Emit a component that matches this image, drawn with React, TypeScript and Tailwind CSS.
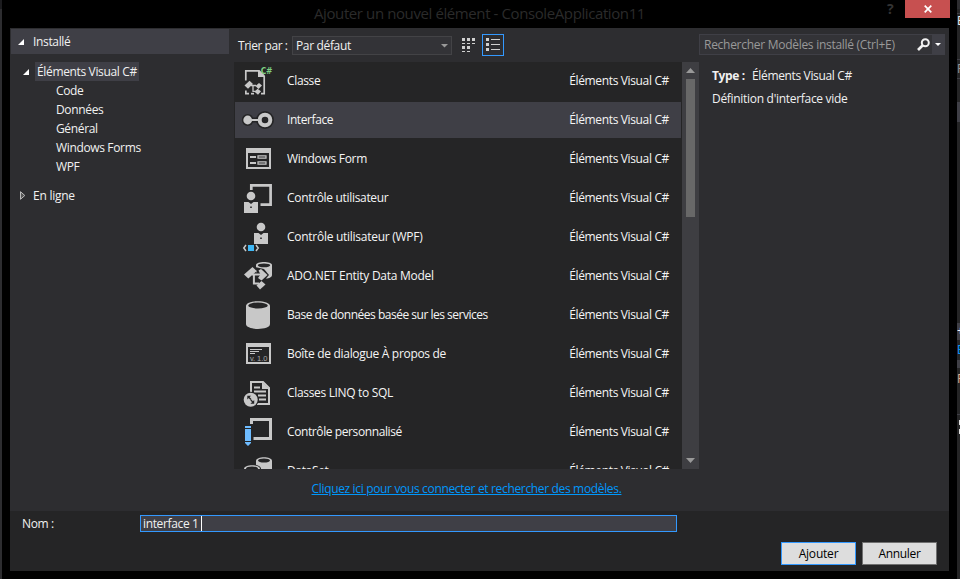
import type { ReactNode } from "react";

const FG = "#c8c8c8";
const BG = "#252526";

function Icon({ children }: { children: ReactNode }) {
  return (
    <svg width="36" height="36" viewBox="0 0 36 36" fill="none" className="shrink-0">
      {children}
    </svg>
  );
}

const Person = ({ x, y }: { x: number; y: number }) => (
  <g>
    <circle cx={x} cy={y} r="5.4" fill={BG} />
    <circle cx={x} cy={y} r="4.3" fill={FG} />
    <path d={`M${x - 7} ${y + 6}h4.500l2.500 2 2.500-2h4.500v11h-14z`} fill={FG} />
    <path d={`M${x - 0.8} ${y + 10.500}h1.600v1.600h-1.600z`} fill={BG} />
  </g>
);

const ClassIcon = () => (
  <Icon>
    <path d="M4.800 17.500V7.800H17.500M23.200 13V30.700H20" stroke={FG} strokeWidth="1.700" />
    <path d="M4 27.500h1.700v2.300H8v1.700H4z" fill={FG} />
    <path d="M17 7h1.500l5.500 5.500V14h-7z" fill={FG} />
    <path d="M3.500 22.500l5-4.700 3.500 3.200-5 4.700z" fill={FG} />
    <path d="M10 22.500h5M12 22v6.300h4" stroke={FG} strokeWidth="1.300" />
    <path d="M14.500 23l3.500-3 3 2.500-3.500 3.500zM13.500 28.800l3-3 3.500 2.500-3 3.500z" fill={FG} />
    <path d="M10 29.800h3v1.700h-3z" fill={FG} />
    <text x="19.700" y="10.600" fontFamily="DejaVu Sans" fontWeight="700" fontSize="8.800" textLength="11.500" lengthAdjust="spacingAndGlyphs" fill="#7fd184">C#</text>
  </Icon>
);

const InterfaceIcon = () => (
  <Icon>
    <g fill={BG}>
      <circle cx="6.700" cy="18" r="5.900" />
      <circle cx="24" cy="18" r="9" />
      <path d="M8 15.500h10v5H8z" />
    </g>
    <path d="M8 18h10" stroke={FG} strokeWidth="2" />
    <circle cx="6.700" cy="18" r="4.400" fill={FG} />
    <circle cx="24" cy="18" r="5.300" stroke={FG} strokeWidth="4" />
  </Icon>
);

const FormIcon = () => (
  <Icon>
    <path d="M5 7h25v21H5zM7 12v14h21V12z" fill={FG} fillRule="evenodd" />
    <path d="M9 16h6M9 22h6" stroke={FG} strokeWidth="2" />
    <path d="M17 14.800h8v2.400h-8zM17 20.800h8v2.400h-8z" stroke={FG} strokeWidth="1.200" />
  </Icon>
);

const UserIcon = () => (
  <Icon>
    <path d="M10.300 10V5.400H29.600V24.600H19.500" stroke={FG} strokeWidth="2.700" />
    <Person x={10} y={16} />
  </Icon>
);

const WpfIcon = () => (
  <Icon>
    <Person x={20} y={8} />
    <path d="M6 25h8v8H6z" fill={BG} />
    <path d="M7 26h6v6H7z" fill="#3fb8f5" />
    <path d="M5 26L2.800 29 5 32M15 26l2.200 3L15 32" stroke={FG} strokeWidth="1.500" />
  </Icon>
);

const AdoIcon = () => (
  <Icon>
    <path d="M15 7c0-4 16-4 16 0v10c0 2-3 3.500-6 3.500L15 14z" fill={FG} />
    <ellipse cx="23" cy="7.300" rx="6.200" ry="1.900" fill={BG} />
    <path d="M14 9l9 2 5 6-6 7-4-2z" fill={BG} />
    <path d="M3 16.500l8.500-7.500 4.300 4-8.500 7.500z" fill={FG} />
    <path d="M11 16.500h9M12.900 16v9.500H18" stroke={FG} strokeWidth="2" />
    <path d="M17.500 12.500l2.500-1.500 6.500 6-6 5.500-3.500-2.500 2.500-3.500z" fill={FG} />
    <path d="M15.500 27.500l5-4.500 4 3.500-5.500 5z" fill={FG} />
  </Icon>
);

const DatabaseIcon = () => (
  <Icon>
    <path d="M5 9C5 2.500 29 2.500 29 9v18c0 6.500-24 6.500-24 0z" fill={FG} />
    <ellipse cx="17" cy="8.500" rx="9.800" ry="3" fill={BG} />
  </Icon>
);

const AboutIcon = () => (
  <Icon>
    <path d="M5 7h25v21H5zM7 11v15h21V11z" fill={FG} fillRule="evenodd" />
    <path d="M9 13.500h12M9 15.500h9M9 17.500h5" stroke={FG} strokeWidth="1" />
    <text x="9" y="25" fontFamily="Liberation Sans" fontSize="7.500" textLength="17" fill="#aaa">v. 1.0</text>
  </Icon>
);

const LinqIcon = () => (
  <Icon>
    <path d="M10 17V7h12l6 6v16H16" stroke={FG} strokeWidth="2" />
    <path d="M21 7v7h7z" fill={FG} />
    <path d="M13 12.500h6M13 16.500h12M17 20.500h8M18 24.500h7" stroke={FG} strokeWidth="1.800" />
    <circle cx="9.700" cy="24.700" r="8" fill={BG} />
    <circle cx="9.700" cy="24.700" r="7" fill={FG} />
    <path d="M6.300 20.800h3.800L6.300 24.600zM13.200 28.700H9.400l3.800-3.800z" fill={BG} />
    <path d="M7.500 22l2.500 2.500M9.800 25l2.400 2.400" stroke={BG} strokeWidth="1.300" />
  </Icon>
);

const CustomIcon = () => (
  <Icon>
    <path d="M10.500 10V5.500h19v19H12.500" stroke={FG} strokeWidth="3" />
    <path d="M4 12h6v2H4zM4 15h6v12H4zM4 28h6v1l-3 3-3-3z" fill="#6ebcff" />
  </Icon>
);

const DataSetIcon = () => (
  <Icon>
    <path d="M15 8c0-5 16-5 16 0v12H15z" fill={FG} />
    <ellipse cx="23" cy="7.500" rx="6" ry="2" fill={BG} />
    <path d="M2 16c0-6 18-6 18 0v8H2z" fill={BG} />
    <path d="M3 16c0-5 16-5 16 0v10H3z" fill={FG} />
    <ellipse cx="11" cy="15.500" rx="6" ry="2" fill={BG} />
  </Icon>
);

const items: { name: string; icon: ReactNode; track: string }[] = [
  { name: "Classe", icon: <ClassIcon />, track: "tracking-[-0.35px]" },
  { name: "Interface", icon: <InterfaceIcon />, track: "tracking-[-0.42px]" },
  { name: "Windows Form", icon: <FormIcon />, track: "tracking-[-0.3px]" },
  { name: "Contrôle utilisateur", icon: <UserIcon />, track: "tracking-[-0.32px]" },
  { name: "Contrôle utilisateur (WPF)", icon: <WpfIcon />, track: "tracking-[-0.27px]" },
  { name: "ADO.NET Entity Data Model", icon: <AdoIcon />, track: "tracking-[-0.27px]" },
  { name: "Base de données basée sur les services", icon: <DatabaseIcon />, track: "tracking-[-0.49px]" },
  { name: "Boîte de dialogue À propos de", icon: <AboutIcon />, track: "tracking-[-0.31px]" },
  { name: "Classes LINQ to SQL", icon: <LinqIcon />, track: "tracking-[-0.33px]" },
  { name: "Contrôle personnalisé", icon: <CustomIcon />, track: "tracking-[-0.4px]" },
  { name: "DataSet", icon: <DataSetIcon />, track: "tracking-[-0.35px]" },
];

function Sidebar() {
  return (
    <aside className="w-[224px] shrink-0 pl-px pt-px">
      <div className="flex h-[25px] w-[218px] items-center bg-[#3f3f46] pl-[7px]">
        <svg width="6" height="6" className="mr-[9px]"><path d="M6 0v6H0z" fill="#fff" /></svg>
        Installé
      </div>
      <div className="mt-2 flex h-[19px] items-center pl-3">
        <svg width="6" height="6" className="mr-[6px]"><path d="M6 0v6H0z" fill="#fff" /></svg>
        <span className="flex h-[19px] w-[104px] items-center bg-[#3f3f46] pl-[2px]">Éléments Visual C#</span>
      </div>
      {["Code", "Données", "Général", "Windows Forms", "WPF"].map((t) => (
        <div key={t} className="h-[19px] pl-[45px] leading-[20px]">{t}</div>
      ))}
      <div className="mt-[10px] flex h-[19px] items-center pl-[9px] tracking-[-0.25px]">
        <svg width="6" height="9" className="mr-[7px]"><path d="M.5 .7v7.600L4.800 4.500z" fill="#555" stroke="#bbb" /></svg>
        En ligne
      </div>
    </aside>
  );
}

function Toolbar() {
  return (
    <div className="flex h-[34px] items-center pl-1">
      <span className="w-[54px] pt-[2px] tracking-[-0.45px]">Trier par :</span>
      <div className="mt-px flex h-[19px] w-[160px] items-center justify-between border border-[#434346] bg-[#333337] pl-[3px] pr-[3px]">
        <span>Par défaut</span>
        <svg width="7" height="4"><path d="M0 0h7L3.500 3.500z" fill="#999" /></svg>
      </div>
      <svg width="13" height="14" className="ml-[10px]" fill="#d0d0d0">
        <path d="M0 0h3v3H0zM5 0h3v3H5zM10 0h3v3h-3zM0 5h3v1H0zM5 5h3v1H5zM10 5h3v1h-3zM0 8h3v3H0zM5 8h3v3H5zM0 13h3v1H0zM5 13h3v1H5z" />
      </svg>
      <div className="ml-[7px] flex h-[22px] w-[22px] items-center justify-center border border-[#3399ff]">
        <svg width="14" height="14" fill="#d0d0d0">
          <path d="M0 0h3v3H0zM0 5h3v3H0zM0 10h3v3H0zM5 1h9v1H5zM5 6h9v1H5zM5 11h9v1H5z" />
        </svg>
      </div>
    </div>
  );
}

function TemplateList() {
  return (
    <div className="flex h-[407px]">
      <div className="w-[448px] overflow-hidden bg-[#252526] pl-px pt-px">
        {items.map((it, i) => (
          <div
            key={it.name}
            className={`mb-[3px] flex h-9 w-[446px] items-center pl-[6px] pr-3 text-[#f5f5f5] ${i === 1 ? "bg-[#3f3f46]" : ""}`}
          >
            {it.icon}
            <span className={`ml-[10px] ${it.track}`}>{it.name}</span>
            <span className="ml-auto">Éléments Visual C#</span>
          </div>
        ))}
      </div>
      <div className="flex w-[17px] flex-col items-center bg-[#3e3e42]">
        <svg width="9" height="5" className="mt-[6px]"><path d="M4.500 0L9 5H0z" fill="#999" /></svg>
        <div className="mt-[6px] h-[138px] w-[9px] bg-[#686868]" />
        <svg width="9" height="5" className="mb-[6px] mt-auto"><path d="M0 0h9L4.500 5z" fill="#999" /></svg>
      </div>
    </div>
  );
}

function Details() {
  return (
    <section className="flex-1 pt-[6px]">
      <div className="flex h-[21px] w-[246px] items-center border border-[#3f3f46] bg-[#333337] pl-1">
        <span className="tracking-[-0.28px] text-[#999]">Rechercher Modèles installé (Ctrl+E)</span>
        <svg width="13" height="13" className="ml-auto mr-[2px]" fill="none">
          <circle cx="8.300" cy="4.700" r="3.500" stroke="#f1f1f1" strokeWidth="2" />
          <path d="M5.500 7.500L1 12" stroke="#f1f1f1" strokeWidth="2.600" />
        </svg>
        <div className="flex h-full w-[12px] items-center justify-center bg-[#3f3f46]">
          <svg width="6" height="3"><path d="M0 0h6L3 3z" fill="#fff" /></svg>
        </div>
      </div>
      <div className="mt-[11px] flex h-[19px] items-center pl-[13px]">
        <b className="w-[40px] font-bold">Type :</b>
        <span>Éléments Visual C#</span>
      </div>
      <div className="mt-1 h-[19px] pl-[13px] leading-[20px] tracking-[-0.3px]">Définition d'interface vide</div>
    </section>
  );
}

export default function App() {
  return (
    <div className="flex h-[579px] w-[960px] overflow-hidden whitespace-nowrap bg-black font-['Open_Sans','Noto_Sans',sans-serif] text-[12px] tracking-[-0.35px] text-[#f1f1f1]">
      <div className="w-[2px] bg-[#2d2d30]"><div className="h-[9px] bg-[#1c1c1f]" /></div>
      <div className="flex w-[947px] flex-col pl-2">
        <header className="flex h-7 items-start">
          <h1 className="ml-[304px] w-[573px] text-[15px] leading-[26px] tracking-[-0.4px] text-[#2b2b2b]">
            Ajouter un nouvel élément - ConsoleApplication11
          </h1>
          <span className="w-[18px] shrink-0 text-[14px] font-bold leading-[17px] text-[#333]">?</span>
          <div className="-mr-px ml-auto flex h-[18px] w-[45px] shrink-0 items-center justify-center bg-[#c75050]">
            <svg width="8" height="8"><path d="M.7 .7l6.600 6.600M7.300 .7L.7 7.300" stroke="#fff" strokeWidth="1.700" /></svg>
          </div>
        </header>
        <main className="flex h-[483px] bg-[#2d2d30]">
          <Sidebar />
          <div className="w-[465px] shrink-0">
            <Toolbar />
            <TemplateList />
            <div className="pt-[11px] text-center leading-[18px] tracking-[-0.34px] text-[#0097fb] underline">
              Cliquez ici pour vous connecter et rechercher des modèles.
            </div>
          </div>
          <Details />
        </main>
        <footer className="h-[60px] bg-[#252526] pt-1">
          <div className="flex h-[17px] items-center pl-3">
            <span className="w-[118px]">Nom :</span>
            <div className="flex h-[17px] w-[537px] items-center border border-[#3399ff] bg-[#3f3f46] pl-[2px]">
              <span className="w-[58px]">interface 1</span>
              <span className="h-[15px] w-px bg-white" />
            </div>
          </div>
          <div className="mt-[10px] flex justify-end gap-[6px] pr-3 text-black">
            <div className="flex h-[23px] w-[75px] items-center justify-center border border-[#3399ff] bg-[#ddd] tracking-[-0.2px]">Ajouter</div>
            <div className="flex h-[23px] w-[75px] items-center justify-center border border-[#707070] bg-[#ddd]">Annuler</div>
          </div>
        </footer>
      </div>
      <div className="ml-2 w-[3px] overflow-hidden bg-[#252526]">
        <div className="h-[9px] bg-[#2d2d30]" />
        <div className="h-[5px] border-b border-[#3f3f46]" />
        <div className="h-[45px] leading-[14px]">E</div>
        <div className="h-[20px] border-y border-[#3f3f46] leading-[18px] text-[#999]">R</div>
        <div className="mt-[23px] h-[20px] bg-[#3f3f46]" />
        <div className="mt-[201px] h-[17px] bg-[#3f3f46] leading-[15px]">+</div>
        <div className="h-[20px] leading-[19px] text-[#0097fb]">E</div>
        <div className="h-[8px] bg-[#3f3f46]" />
        <div className="mt-[2px] h-[20px] leading-[18px] text-[#ddb090]">P</div>
        <div className="mt-[24px] border-t border-[#3f3f46] pl-[2px] pt-[5px]">
          <div className="h-[5px] bg-[#ddd]" />
          <div className="mt-[4px] h-[5px] bg-[#ddd]" />
        </div>
      </div>
    </div>
  );
}
